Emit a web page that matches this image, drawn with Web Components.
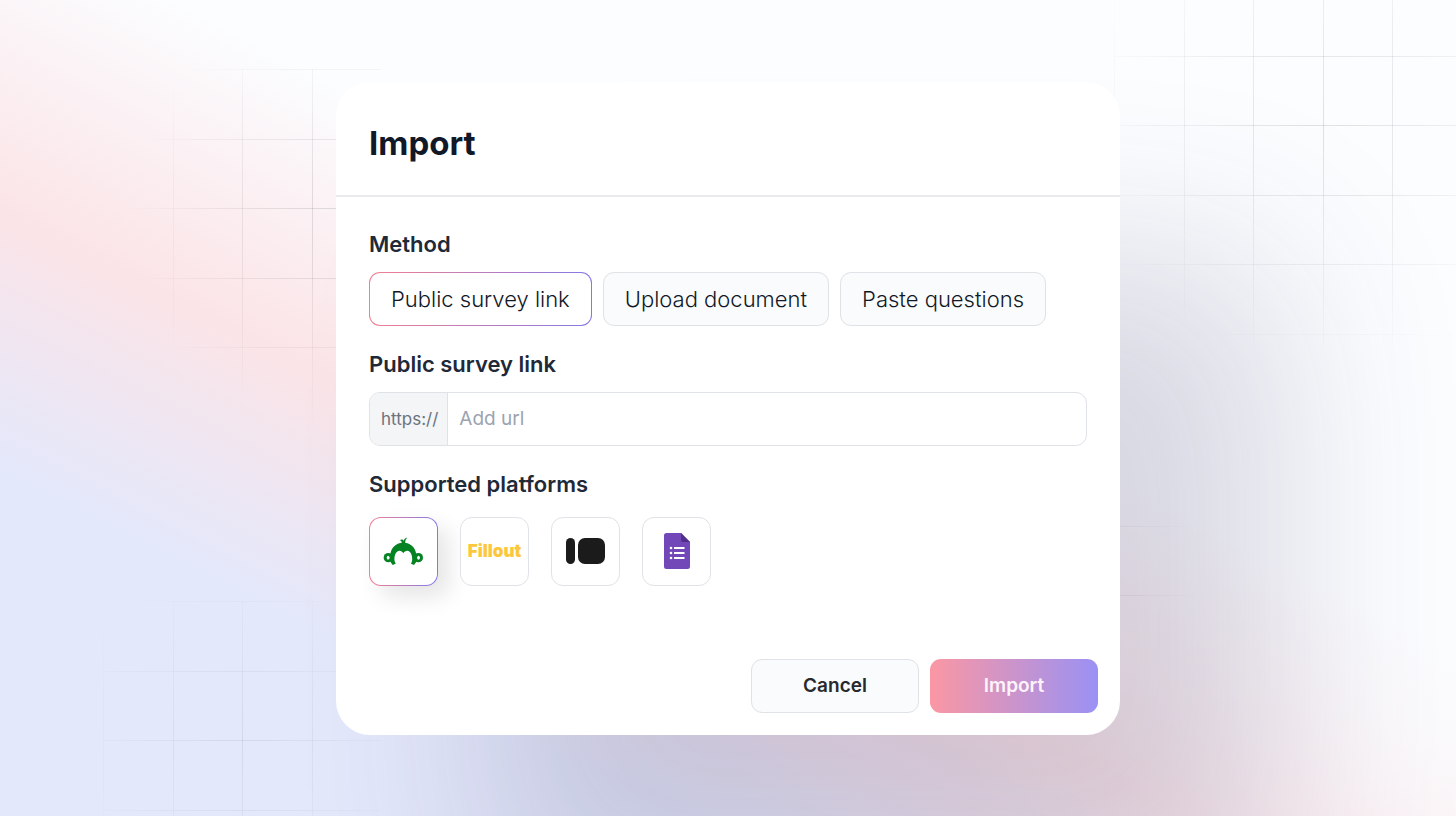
<!DOCTYPE html>
<html lang="en">
<head>
<meta charset="utf-8">
<meta name="viewport" content="width=device-width, initial-scale=1">
<title>Import</title>
<style>
  body { margin: 0; font-family: Inter, "Liberation Sans", sans-serif; color: #111827; }
</style>
</head>
<body>
<page-backdrop>
  <import-dialog heading="Import">
    <field-group label="Method">
      <method-picker>
        <method-option selected>Public survey link</method-option>
        <method-option>Upload document</method-option>
        <method-option>Paste questions</method-option>
      </method-picker>
    </field-group>
    <url-field label="Public survey link" prefix="https://" placeholder="Add url"></url-field>
    <field-group label="Supported platforms" roomy>
      <platform-list>
        <platform-tile name="SurveyMonkey" selected>
          <svg width="41" height="29" viewBox="70 95 123 87" aria-hidden="true">
            <g fill="#058322">
              <circle cx="86" cy="157" r="14"/><circle cx="176" cy="157" r="14"/>
              <path d="M99 179 L93 171 C85 129 109 112 131 112 C153 112 177 129 169 171 L163 179 L154 175 L157 168 C160 152 153 136 143 136 C138 136 133 139 131 144 C129 139 124 136 119 136 C109 136 102 152 105 168 L108 175 Z"/>
              <path d="M126 115 C127 108 124 106 120 105 C126 101 131 103 132 107 C133 101 137 97 143 97 C137 102 136 107 137 115 Z"/>
            </g>
            <path fill="#fff" d="M85 151 q5 1 5 6 q0 5 -5 6 q-4 -1 -4 -6 q0 -5 4 -6Z M177 151 q-5 1 -5 6 q0 5 5 6 q4 -1 4 -6 q0 -5 -4 -6Z"/>
          </svg>
        </platform-tile>
        <platform-tile name="Fillout"><fillout-logo></fillout-logo></platform-tile>
        <platform-tile name="Typeform">
          <svg width="39" height="26" viewBox="0 0 39 26" fill="#1b1b1b" aria-hidden="true">
            <rect width="9" height="26" rx="4.5"/><rect x="12" width="27" height="26" rx="7"/>
          </svg>
        </platform-tile>
        <platform-tile name="Google Forms">
          <svg width="26" height="36" viewBox="0 0 26 36" aria-hidden="true">
            <path fill="#7248b9" d="M2.5 0H17l9 9v24.500a2.500 2.500 0 0 1-2.500 2.500h-21A2.500 2.500 0 0 1 0 33.500v-31A2.500 2.500 0 0 1 2.500 0Z"/>
            <path fill="#502f8a" d="M17 0l9 9h-7a2 2 0 0 1-2-2Z"/>
            <g fill="#fff">
              <circle cx="7" cy="15" r="1.300"/><circle cx="7" cy="20" r="1.300"/><circle cx="7" cy="25" r="1.300"/>
              <path d="M10 14h10.500v2H10ZM10 19h10.500v2H10ZM10 24h10.500v2H10Z"/>
            </g>
          </svg>
        </platform-tile>
      </platform-list>
    </field-group>
    <dialog-button slot="actions">Cancel</dialog-button>
    <dialog-button slot="actions" primary>Import</dialog-button>
  </import-dialog>
</page-backdrop>

<script>
  class Base extends HTMLElement {
    connectedCallback() {
      if (this.shadowRoot) return;
      this.attachShadow({ mode: 'open' }).innerHTML =
        '<style>*{box-sizing:border-box}</style>' + this.view();
    }
    attr(n) { return this.getAttribute(n) || ''; }
  }
  const define = (name, view) =>
    customElements.define(name, class extends Base { view() { return view(this); } });

  // Diagonal wash with patches of faded grid behind the dialog
  define('page-backdrop', () => `
    <style>
      :host { position: relative; display: grid; place-items: center; min-height: 100vh;
        box-sizing: border-box; padding: 24px; overflow: hidden;
        background:
          radial-gradient(ellipse 500px 300px at 100% 88%, #fbfdffb0, #fbfdff00),
          linear-gradient(207deg, #fbfdff 42%, #fbe4e7 61%, #e3e8fb 78%); }
      .grid { position: absolute; --line: rgba(60, 65, 75, .14);
        background:
          linear-gradient(90deg, var(--line) 1px, transparent 1px 70px, var(--line) 70px 71px, transparent 71px) 0 0 / 139px 139px,
          linear-gradient(var(--line) 1px, transparent 1px 70px, var(--line) 70px 71px, transparent 71px) 0 0 / 139px 139px; }
      .tl { left: 103px; top: 69px; width: 278px; height: 360px;
        mask: radial-gradient(circle at 230px 150px, #000 30px, transparent 210px); }
      .bl { left: 103px; bottom: 0; width: 278px; height: 215px;
        mask: radial-gradient(circle at 139px 139px, #000a, transparent 180px); }
      .tr { right: 0; top: -14px; width: 342px; height: 360px;
        mask: radial-gradient(circle at 209px 139px, #000 20px, transparent 250px); }
      .br { right: 268px; bottom: 151px; width: 209px; height: 209px;
        mask: radial-gradient(circle at 120px 110px, #000a, transparent 110px); }
      slot { display: contents; }
    </style>
    <div class="grid tl"></div><div class="grid bl"></div>
    <div class="grid tr"></div><div class="grid br"></div>
    <slot></slot>`);

  define('import-dialog', el => `
    <style>
      :host { position: relative; display: block; width: 100%; max-width: 784px; box-sizing: border-box;
        background: #fff; border-radius: 34px;
        box-shadow: 155px 180px 190px rgba(66, 54, 100, .19); }
      header { padding: 40px 33px 31px; border-bottom: 2px solid #e8eaed; }
      h1 { margin: 0; font-size: 33px; line-height: 42px; font-weight: 700; color: #111827; }
      main { display: flex; flex-direction: column; gap: 24px; padding: 33px 33px 0; }
      footer { display: flex; justify-content: flex-end; flex-wrap: wrap; gap: 11px; padding: 73px 22px 22px; }
    </style>
    <header><h1>${el.attr('heading')}</h1></header>
    <main><slot></slot></main>
    <footer><slot name="actions"></slot></footer>`);

  define('field-group', el => `
    <style>
      :host { display: flex; flex-direction: column; gap: 14px; }
      :host([roomy]) { gap: 19px; }
      h2 { margin: 0; font-size: 22px; line-height: 28px; font-weight: 600; color: #1f2937; }
    </style>
    <h2>${el.attr('label')}</h2><slot></slot>`);

  define('method-picker', () => `
    <style>:host { display: flex; flex-wrap: wrap; gap: 11px; }</style><slot></slot>`);

  define('method-option', el => `
    <style>
      :host { display: block; }
      button { display: block; height: 54px; padding: 0 21px; border: 1px solid #dfe2e6; border-radius: 11px;
        background: #f9fbfc; font: 350 22px/28px Inter, sans-serif; color: #111827; white-space: nowrap; }
      :host([selected]) button { border-color: transparent;
        background: linear-gradient(#fff, #fff) padding-box, linear-gradient(90deg, #f27f91, #8578e6) border-box; }
    </style>
    <button type="button" aria-pressed="${el.hasAttribute('selected')}"><slot></slot></button>`);

  define('url-field', el => `
    <style>
      :host { display: flex; flex-direction: column; gap: 14px; }
      label { font-size: 22px; line-height: 28px; font-weight: 600; color: #1f2937; }
      .box { display: flex; height: 54px; border: 1px solid #dfe2e6; border-radius: 11px; overflow: hidden; background: #fff; }
      .prefix { display: flex; align-items: center; padding: 0 9px 0 11px; background: #f3f5f7;
        border-right: 1px solid #dfe2e6; font-size: 17px; color: #6b7280; }
      input { flex: 1; min-width: 0; border: 0; outline: 0; padding: 0 11px; background: none;
        font: 400 19px/28px Inter, sans-serif; color: #111827; }
      input::placeholder { color: #9ca3af; opacity: 1; }
    </style>
    <label for="url">${el.attr('label')}</label>
    <div class="box"><span class="prefix">${el.attr('prefix')}</span>
      <input id="url" type="text" placeholder="${el.attr('placeholder')}"></div>`);

  define('platform-list', () => `
    <style>:host { display: flex; flex-wrap: wrap; gap: 22px; }</style><slot></slot>`);

  define('platform-tile', el => `
    <style>
      :host { display: block; }
      button { display: flex; align-items: center; justify-content: center; width: 69px; height: 69px; padding: 0;
        border: 1px solid #dfe2e6; border-radius: 12px; background: #fff; }
      :host([selected]) button { border-color: transparent;
        background: linear-gradient(#fff, #fff) padding-box, linear-gradient(90deg, #f27f91, #8578e6) border-box;
        box-shadow: 11px 11px 22px rgba(0, 0, 0, .1); }
      ::slotted(*) { flex: none; }
    </style>
    <button type="button" aria-label="${el.attr('name')}"><slot></slot></button>`);

  define('fillout-logo', () => `
    <style>:host { display: block; font: 900 17px/20px Inter, sans-serif; color: #fcc73d; }</style>Fillout`);

  define('dialog-button', el => `
    <style>
      :host { display: block; }
      button { display: block; width: 168px; height: 54px; padding: 0; border: 1px solid #dfe2e6; border-radius: 11px;
        background: #f9fbfc; font: 600 19px/24px Inter, sans-serif; color: #27292d; }
      :host([primary]) button { border: 0; color: #fdf3fa; background: linear-gradient(90deg, #fb97a3, #9a91f4); }
    </style>
    <button type="button"><slot></slot></button>`);
</script>
</body>
</html>
